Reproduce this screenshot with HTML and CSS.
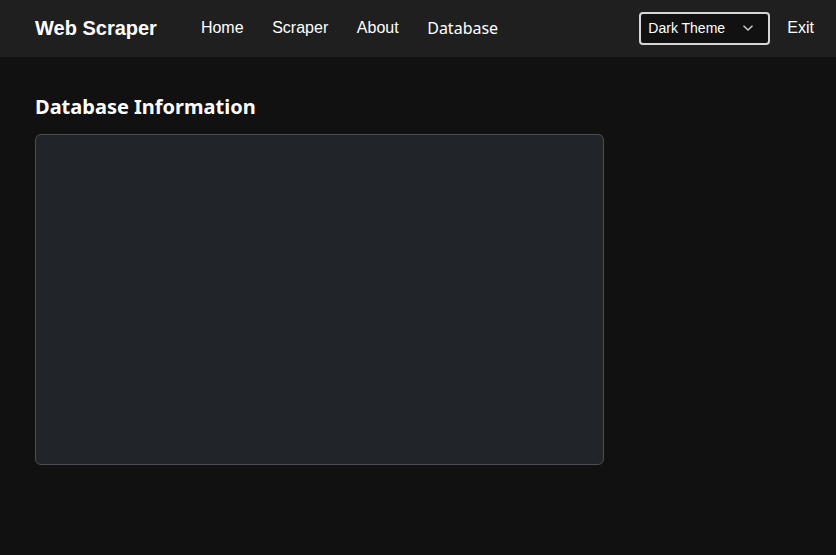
FILE: index.html
```html
<!DOCTYPE html>
<html lang="en">
<head>
<meta charset="utf-8">
<title>Web Scraper - Database</title>
<link rel="stylesheet" href="styles.css">
</head>
<body>
<header class="navbar">
  <div class="brand">Web Scraper</div>
  <nav class="links">
    <a class="link" href="#">Home</a>
    <a class="link" href="#">Scraper</a>
    <a class="link" href="#">About</a>
    <a class="link active" href="#">Database</a>
  </nav>
  <div class="right">
    <div class="select">
      <span class="select-text">Dark Theme</span>
      <svg class="chev" width="12" height="8" viewBox="0 0 12 8"><path d="M1.5 1.8 L6 6 L10.5 1.8" fill="none" stroke="#d0d0d0" stroke-width="1.4"/></svg>
    </div>
    <a class="exit" href="#">Exit</a>
  </div>
</header>
<main class="content">
  <h2 class="title">Database Information</h2>
  <div class="panel"></div>
</main>
</body>
</html>
```
FILE: styles.css
```css
* { box-sizing: border-box; }
html, body { margin: 0; padding: 0; }
body {
  background: #111111;
  color: #ffffff;
  font-family: "Liberation Sans", Arial, sans-serif;
  height: 555px;
}
.navbar {
  height: 57px;
  background: #1f1f1f;
  display: flex;
  align-items: center;
  padding: 0 22px 2px 35px;
}
.brand {
  font-weight: bold;
  font-size: 20px;
  margin-right: 30px;
  padding-top: 1px;
}
.links {
  display: flex;
  align-items: center;
  gap: 28.6px;
  padding-left: 14px;
}
.link {
  color: #ffffff;
  text-decoration: none;
  font-size: 16px;
}
.link.active {
  font-family: "Noto Sans", "Open Sans", sans-serif;
  font-size: 16px;
}
.right {
  margin-left: auto;
  display: flex;
  align-items: center;
  gap: 17px;
}
.select {
  width: 131px;
  height: 33px;
  border: 2px solid #d6d6d6;
  border-radius: 4px;
  background: #111111;
  display: flex;
  align-items: center;
  justify-content: space-between;
  padding: 0 14px 0 7px;
  margin-top: 1px;
}
.select-text {
  font-size: 14px;
  color: #ffffff;
}
.chev { display: block; }
.exit {
  color: #ffffff;
  text-decoration: none;
  font-size: 16px;
}
.content {
  padding: 36px 35px 0 35px;
}
.title {
  margin: 0 0 13px 0;
  font-family: "Noto Sans", "Open Sans", sans-serif;
  font-weight: bold;
  font-size: 20px;
  line-height: 28px;
}
.panel {
  width: 569px;
  height: 331px;
  background: #212429;
  border: 1px solid #4a4f56;
  border-radius: 6px;
}
```
